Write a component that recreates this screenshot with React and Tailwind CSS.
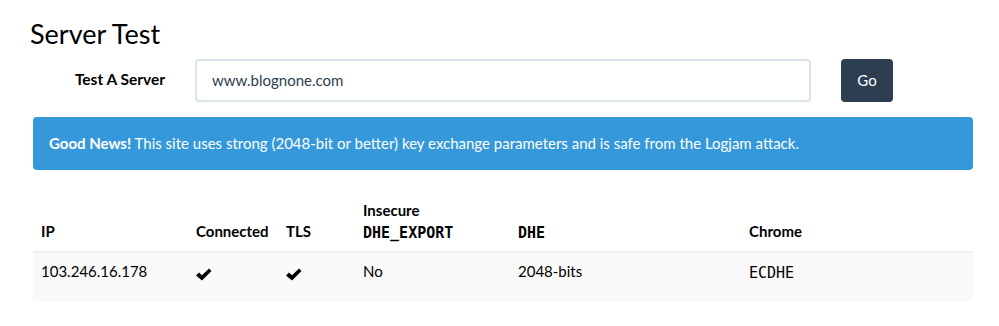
import React from 'react';

const mono = { fontFamily: '"DejaVu Sans Mono", monospace' };

const Check = () => (
  <svg width="16" height="13" viewBox="0 0 16 13" className="inline-block mt-[3px]">
    <polygon points="0,7.5 3,4.5 6,7.3 13,0.5 15.5,3 6,12.5" fill="#000" />
  </svg>
);

const App = () => {
  const rows = [
    { ip: '103.246.16.178', connected: true, tls: true, exportDhe: 'No', dhe: '2048-bits', chrome: 'ECDHE' },
  ];

  return (
    <div className="min-h-screen bg-white font-['Lato',sans-serif] text-[15px] text-black">
      <div className="w-[940px] ml-[33px] pt-[20px]">
        <h3 className="text-[27px] leading-[28.6px] font-normal -ml-[3px]">Server Test</h3>

        <form className="mt-[10px] flex items-center h-[43px]" onSubmit={(e) => e.preventDefault()}>
          <label className="w-[132px] text-right font-bold text-[15.5px]">Test A Server</label>
          <input
            type="text"
            defaultValue="www.blognone.com"
            className="ml-[30px] w-[616px] h-[43px] px-[15px] border-2 border-[#dce4ec] rounded-[4px] text-[15px] text-[#2c3e50] outline-none"
          />
          <button type="submit" className="ml-[30px] w-[52px] h-[43px] bg-[#2c3e50] text-white rounded-[4px] text-[15px]">
            Go
          </button>
        </form>

        <div className="mt-[15px] h-[53px] flex items-center px-[16px] bg-[#3498db] text-white rounded-[4px]">
          <p>
            <strong>Good News!</strong> This site uses strong (2048-bit or better) key exchange parameters and is safe from the Logjam attack.
          </p>
        </div>

        <div className="mt-[21px]">
          <div className="grid grid-cols-[155px_90px_77px_155px_231px_232px] h-[62px] items-end border-b-2 border-[#ecf0f1] font-bold leading-[21.4px]">
            <div className="px-[8px] pb-[8px]">IP</div>
            <div className="px-[8px] pb-[8px]">Connected</div>
            <div className="px-[8px] pb-[8px]">TLS</div>
            <div className="px-[8px] pb-[8px]">
              <div>Insecure</div>
              <div className="pt-[2px] -mb-[2px]" style={mono}>DHE_EXPORT</div>
            </div>
            <div className="px-[8px] pb-[8px]">
              <div className="pt-[2px] -mb-[2px]" style={mono}>DHE</div>
            </div>
            <div className="px-[8px] pb-[8px]">Chrome</div>
          </div>
          {rows.map((r) => (
            <div key={r.ip} className="grid grid-cols-[155px_90px_77px_155px_231px_232px] h-[48px] items-start bg-[#f9f9f9] leading-[21.4px]">
              <div className="px-[8px] pt-[8px]">{r.ip}</div>
              <div className="px-[8px] pt-[8px]">{r.connected && <Check />}</div>
              <div className="px-[8px] pt-[8px]">{r.tls && <Check />}</div>
              <div className="px-[8px] pt-[8px]">{r.exportDhe}</div>
              <div className="px-[8px] pt-[8px]">{r.dhe}</div>
              <div className="px-[8px] pt-[10px]" style={mono}>{r.chrome}</div>
            </div>
          ))}
        </div>
      </div>
    </div>
  );
};

export default App;
